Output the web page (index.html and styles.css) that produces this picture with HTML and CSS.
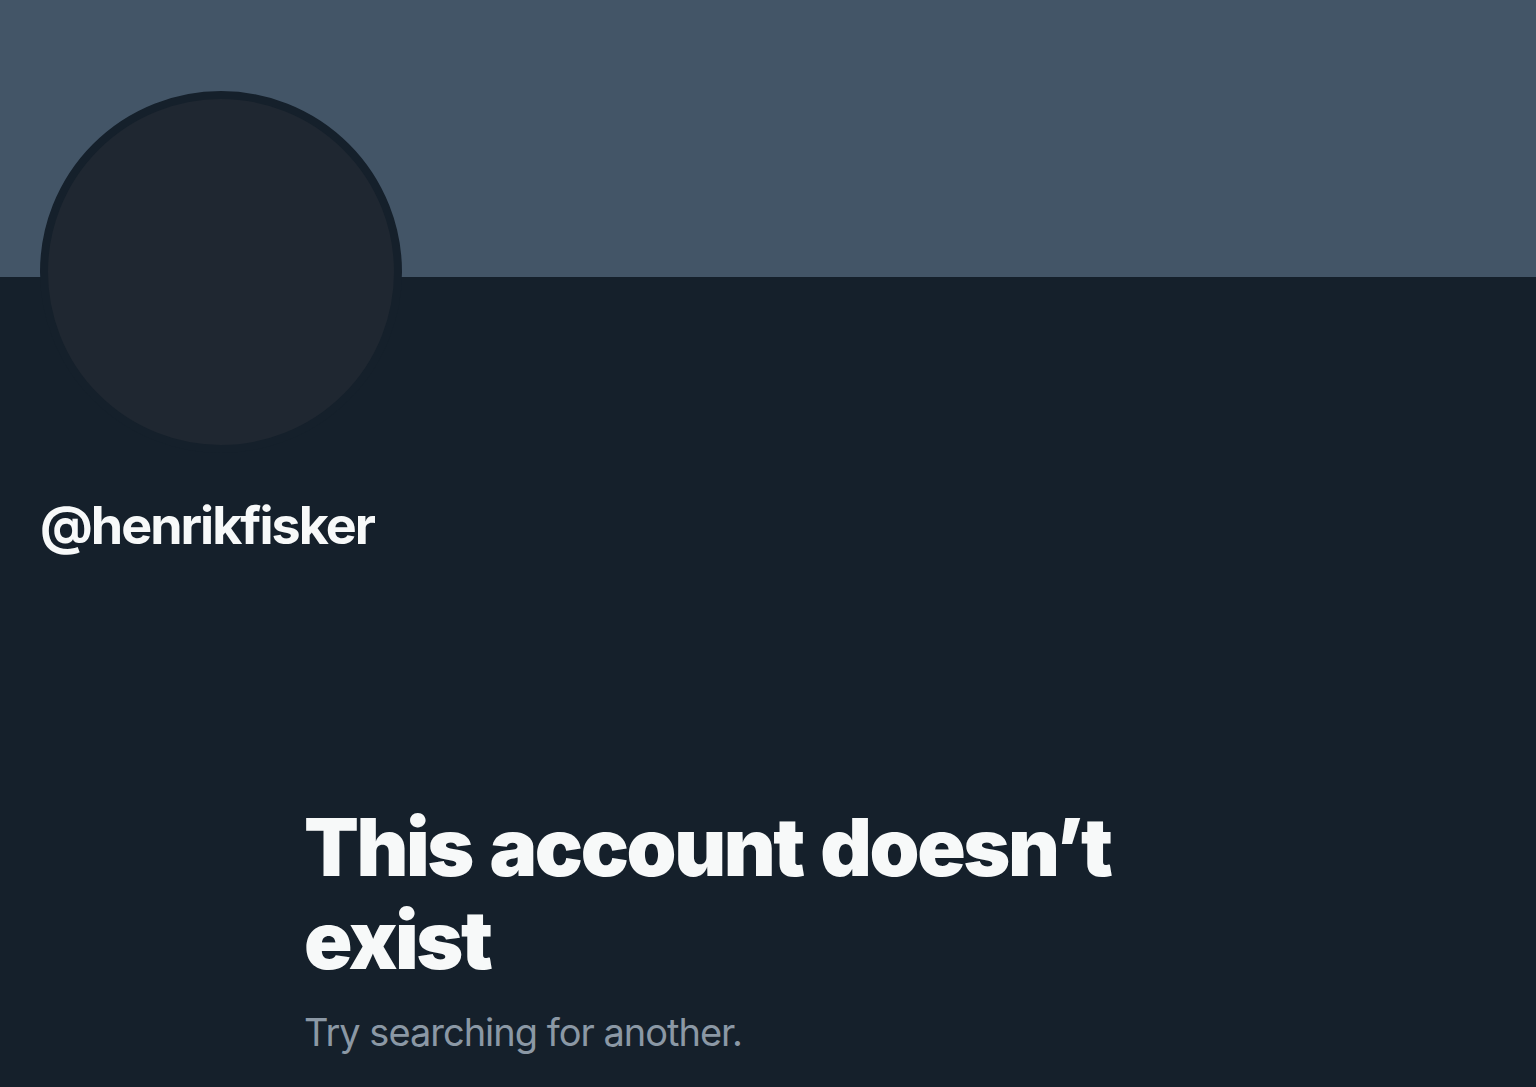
FILE: index.html
```html
<!DOCTYPE html>
<html lang="en">
<head>
<meta charset="utf-8">
<title>@henrikfisker</title>
<link rel="stylesheet" href="styles.css">
</head>
<body>
<main class="page">
  <div class="banner"></div>
  <section class="profile">
    <div class="avatar"></div>
    <div class="handle">@henrikfisker</div>
    <div class="empty">
      <h1 class="empty-title">This account doesn’t exist</h1>
      <p class="empty-sub">Try searching for another.</p>
    </div>
  </section>
</main>
</body>
</html>
```

FILE: styles.css
```css
html, body {
  margin: 0;
  padding: 0;
  background: #15202b;
}
.page {
  min-height: 1087px;
  background: #15202b;
  font-family: Inter, "Noto Sans", sans-serif;
  color: #f7f9f9;
  overflow: hidden;
}
.banner {
  height: 277px;
  background: #435567;
}
.profile {
  padding: 0 40px;
}
.avatar {
  width: 346px;
  height: 346px;
  border: 8px solid #15202b;
  border-radius: 50%;
  background: #1f2731;
  margin-top: -186px;
}
.handle {
  margin-top: 42px;
  font-size: 52px;
  line-height: 62px;
  font-weight: 700;
  letter-spacing: -2px;
}
.empty {
  margin-left: 264px;
  max-width: 870px;
  margin-top: 243px;
}
.empty-title {
  margin: 0;
  font-size: 80px;
  line-height: 93px;
  font-weight: 900;
  letter-spacing: -2.4px;
  word-spacing: 4px;
}
.empty-sub {
  margin: 21px 0 0;
  font-size: 38px;
  line-height: 50px;
  letter-spacing: -1px;
  color: #8b98a5;
}
```
